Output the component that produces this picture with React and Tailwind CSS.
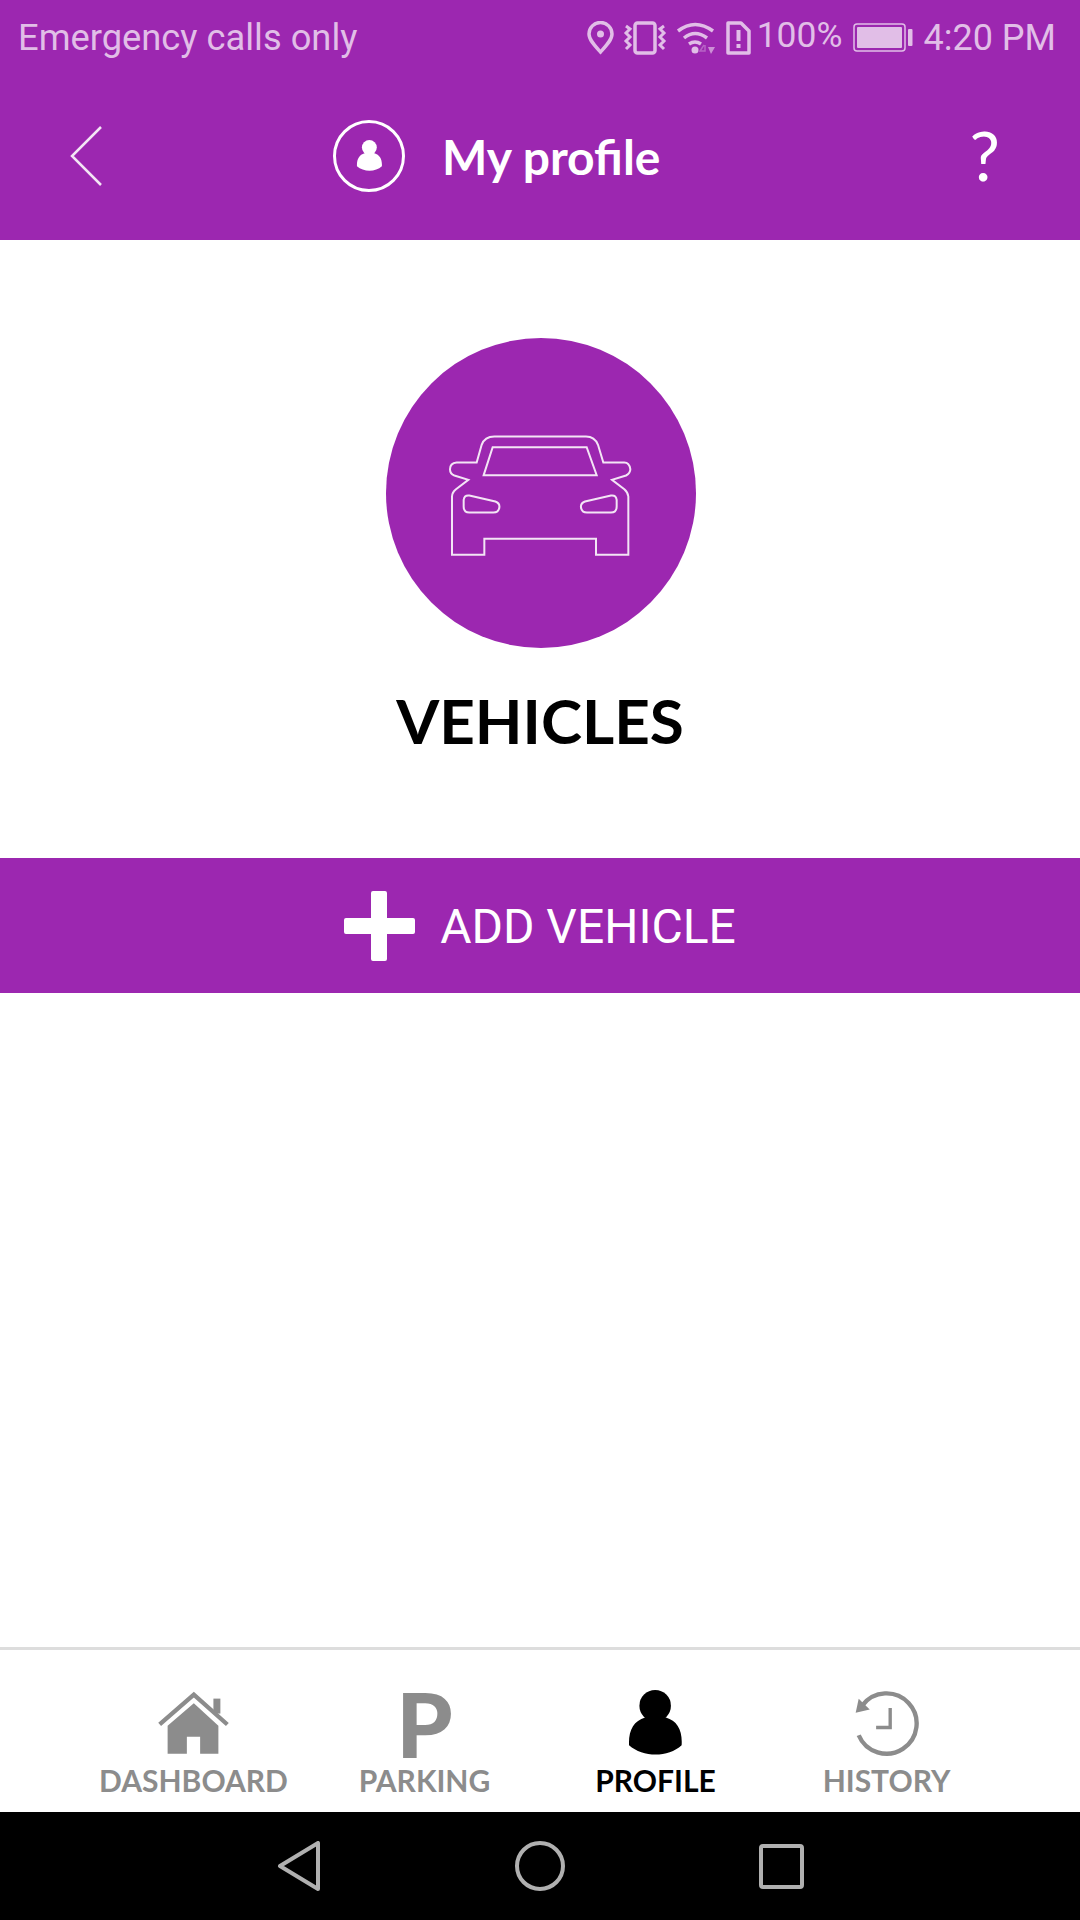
const lato = 'font-[Lato,sans-serif]';
const roboto = 'font-[Roboto,sans-serif]';

function PersonIcon({ className, fill }) {
  return (
    <svg viewBox="262 150 170 200" className={className} fill={fill}>
      <circle cx="346" cy="197" r="47" />
      <path d="M268 315 C266 270 282 242 316 232 C335 222 358 222 378 232 C412 242 428 270 425 315 C385 352 310 352 268 315 Z" />
    </svg>
  );
}

function HomeIcon() {
  return (
    <svg viewBox="230 150 220 194" className="w-[73px] h-[65px]" fill="#8c8c8c">
      <path d="M238 250 L341 160 L442 250" fill="none" stroke="#8c8c8c" strokeWidth="13" strokeLinejoin="miter" />
      <rect x="400" y="172" width="21" height="45" />
      <path d="M262 338 L262 254 L341 186 L415 254 L415 338 L360 338 L360 287 L320 287 L320 338 Z" />
    </svg>
  );
}

function HistoryIcon() {
  return (
    <svg viewBox="940 150 200 200" className="w-[67px] h-[67px]" fill="none" stroke="#8c8c8c">
      <path d="M968 196 A90 90 0 1 1 957 285" strokeWidth="13" />
      <path d="M948 218 L957 176 L990 208 Z" fill="#8c8c8c" stroke="none" />
      <path d="M1051 204 L1051 262 L1009 262" strokeWidth="10" />
    </svg>
  );
}

function CarIcon() {
  return (
    <svg viewBox="230 310 570 380" className="w-[190px] h-[127px]" fill="none" stroke="#f3e5f5" strokeWidth="6">
      <path d="M248 675 L345 675 L345 627 L680 627 L680 675 L777 675 L777 500 Q776 488 765 478 L728 450 L770 437 Q783 430 783 418 Q780 398 765 398 L702 398 L686 345 Q676 320 650 320 L375 320 Q346 320 337 345 L322 398 L262 398 Q242 400 242 418 Q242 432 255 437 L297 450 L260 478 Q248 488 248 500 Z" />
      <path d="M343 436 L370 352 L652 352 L682 436 Z" />
      <path d="M300 497 L378 515 Q392 520 390 533 Q388 548 372 548 L300 548 Q283 548 283 530 L283 510 Q285 495 300 497 Z" />
      <path d="M725 497 L647 515 Q633 520 635 533 Q637 548 653 548 L725 548 Q742 548 742 530 L742 510 Q740 495 725 497 Z" />
    </svg>
  );
}

function StatusIcons() {
  const c = '#e1bee7';
  return (
    <div className="flex items-center">
      <svg viewBox="0 0 27 34" className="w-[27px] h-[34px]" fill="none" stroke={c} strokeWidth="3.5">
        <path d="M13.5 31 C8 25 2 19 2 13 A11.5 11.5 0 0 1 25 13 C25 19 19 25 13.5 31 Z" />
        <circle cx="13.5" cy="13" r="3.5" fill={c} stroke="none" />
      </svg>
      <svg viewBox="0 0 44 34" className="w-[44px] h-[34px] ml-[9px]" fill="none" stroke={c} strokeWidth="3.5">
        <rect x="12" y="2" width="20" height="30" rx="2.5" />
        <path d="M3 5 L7 8 L3 12 L7 16 L3 20 L7 24 L3 28" strokeWidth="3" />
        <path d="M41 5 L37 8 L41 12 L37 16 L41 20 L37 24 L41 28" strokeWidth="3" />
      </svg>
      <svg viewBox="0 0 40 34" className="w-[40px] h-[34px] ml-[9px]" fill="none" stroke={c} strokeWidth="3.5">
        <path d="M2 10 Q19 -3 37 10" />
        <path d="M8 17 Q19 8 31 17" />
        <path d="M13 23 Q19 19 25 23" />
        <circle cx="19" cy="29" r="3.5" fill={c} stroke="none" />
        <path d="M32 26 L39 26 L35 33 Z" fill={c} fillOpacity="0.7" stroke="none" />
        <path d="M28 24 L24 30 L29 30 L29 24" stroke={c} strokeOpacity="0.4" strokeWidth="1.5" />
      </svg>
      <svg viewBox="0 0 26 34" className="w-[26px] h-[34px] ml-[9px]" fill="none" stroke={c} strokeWidth="3.5">
        <path d="M3 2 L16 2 L24 10 L24 32 L3 32 Z" strokeLinejoin="round" />
        <rect x="11.5" y="9" width="4" height="11" fill={c} stroke="none" />
        <rect x="11.5" y="23" width="4" height="4" fill={c} stroke="none" />
      </svg>
      <span className={`${roboto} text-[35.5px] leading-[34px] text-[#e1bee7] ml-[6px] -mt-[6px]`}>100%</span>
      <svg viewBox="0 0 60 30" className="w-[60px] h-[30px] ml-[10px]" fill="none" stroke={c}>
        <rect x="1" y="1" width="51" height="27" rx="3" strokeWidth="1.5" />
        <rect x="4" y="4" width="45" height="21" rx="1" fill={c} stroke="none" />
        <rect x="55" y="6" width="4.5" height="17" rx="1" fill={c} stroke="none" />
      </svg>
      <span className={`${roboto} text-[36px] leading-[36px] text-[#e1bee7] ml-[11px]`}>4:20 PM</span>
    </div>
  );
}

const tabs = [
  { label: 'DASHBOARD', icon: <HomeIcon /> },
  { label: 'PARKING', icon: <span className={`${lato} font-black text-[90px] leading-[67px] text-[#8c8c8c]`}>P</span> },
  { label: 'PROFILE', active: true, icon: <PersonIcon className="w-[57px] h-[67px]" fill="#000" /> },
  { label: 'HISTORY', icon: <HistoryIcon /> },
];

export default function App() {
  return (
    <div className="flex flex-col w-[1080px] h-[1920px] bg-white overflow-hidden">
      <div className="bg-[#9c27b0] h-[240px] shrink-0 flex flex-col">
        <div className="flex items-center justify-between h-[75px] pl-[18px] pr-[24px]">
          <span className={`${roboto} text-[36.3px] leading-[36px] text-[#e1bee7]`}>Emergency calls only</span>
          <StatusIcons />
        </div>
        <div className="flex items-center h-[162px] text-white">
          <svg viewBox="0 0 34 62" className="w-[34px] h-[62px] ml-[69px]" fill="none" stroke="#f3e5f5" strokeWidth="2.5">
            <path d="M32 2 L3 31 L32 60" />
          </svg>
          <div className="w-[72px] h-[72px] ml-[230px] rounded-full border-[3px] border-white flex items-center justify-center">
            <PersonIcon className="w-[27px] h-[32px]" fill="#fff" />
          </div>
          <span className={`${lato} font-bold text-[48px] leading-[48px] ml-[37px] mt-[1px]`}>My profile</span>
          <span className={`${lato} text-[68px] leading-[68px] ml-auto mr-[80px] -mt-[2px]`}>?</span>
        </div>
      </div>

      <div className="flex flex-col items-center grow">
        <div className="w-[310px] h-[310px] mt-[98px] ml-[1px] rounded-full bg-[#9c27b0] flex items-center justify-center pt-[6px]">
          <CarIcon />
        </div>
        <h1 className={`${lato} font-bold text-[62px] leading-[72px] text-black mt-[36px]`}>VEHICLES</h1>
        <div className="self-stretch h-[135px] mt-[102px] bg-[#9c27b0] flex items-center justify-center text-white">
          <svg viewBox="0 0 72 72" className="w-[72px] h-[72px]" fill="#fff">
            <path d="M27 3 Q27 1 29 1 L41 1 Q43 1 43 3 L43 28 L69 28 Q71 28 71 30 L71 42 Q71 44 69 44 L43 44 L43 69 Q43 71 41 71 L29 71 Q27 71 27 69 L27 44 L2 44 Q0 44 0 42 L0 30 Q0 28 2 28 L27 28 Z" />
          </svg>
          <span className={`${roboto} text-[48px] leading-[48px] ml-[24px] mt-[2px]`}>ADD VEHICLE</span>
        </div>
      </div>

      <div className="h-[165px] shrink-0 border-t-[3px] border-[#dddddd] grid grid-cols-4 px-[78px] pt-[40px]">
        {tabs.map((t) => (
          <div key={t.label} className="flex flex-col items-center">
            <div className="h-[67px] flex items-center justify-center">{t.icon}</div>
            <span className={`${lato} font-bold text-[30px] leading-[36px] mt-[5px] ${t.active ? 'text-black' : 'text-[#8c8c8c]'}`}>{t.label}</span>
          </div>
        ))}
      </div>

      <div className="h-[108px] shrink-0 bg-black flex items-center justify-center gap-[194px]">
        <svg viewBox="0 0 44 50" className="w-[44px] h-[50px]" fill="none" stroke="#b0b0b0" strokeWidth="4" strokeLinejoin="round">
          <path d="M3 25 L41 2 L41 48 Z" />
        </svg>
        <div className="w-[50px] h-[50px] rounded-full border-[4px] border-[#b0b0b0]" />
        <div className="w-[45px] h-[45px] rounded-[4px] border-[4px] border-[#b0b0b0]" />
      </div>
    </div>
  );
}
